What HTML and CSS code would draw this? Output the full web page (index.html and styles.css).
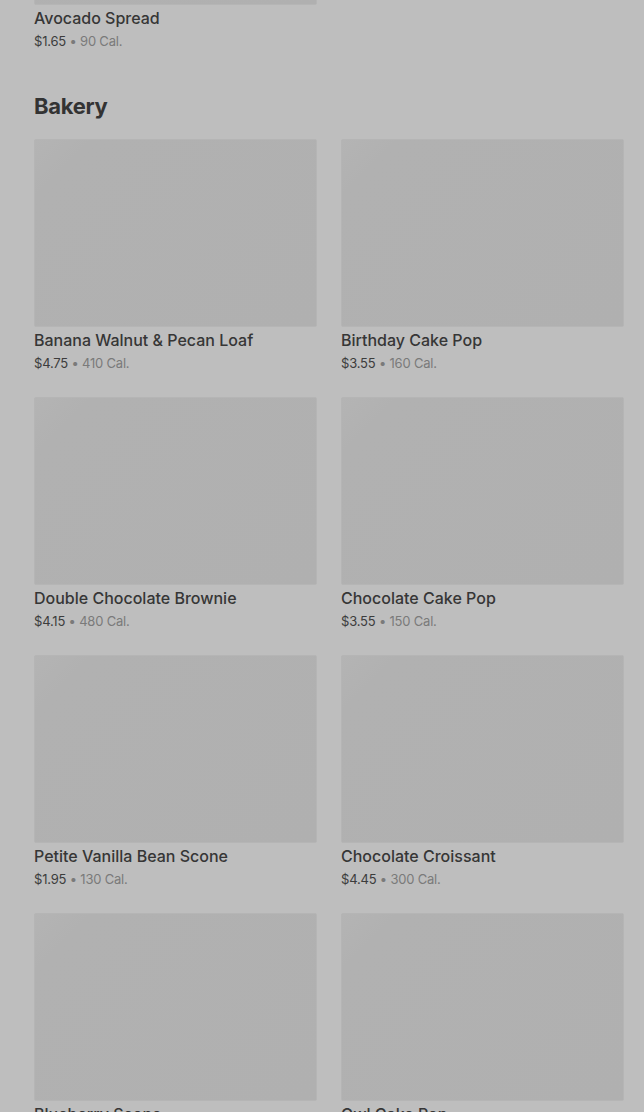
FILE: index.html
```html
<!DOCTYPE html>
<html>
<head>
<meta charset="utf-8">
<link rel="stylesheet" href="styles.css">
</head>
<body>
<main class="page">
  <section class="section section-prev">
    <div class="grid">
      <div class="card">
        <div class="thumb"></div>
        <div class="name">Avocado Spread</div>
        <div class="meta"><span class="price">$1.65</span> <span class="cal">• 90 Cal.</span></div>
      </div>
    </div>
  </section>
  <section class="section">
    <h2 class="heading">Bakery</h2>
    <div class="grid">
      <div class="card"><div class="thumb"></div><div class="name">Banana Walnut &amp; Pecan Loaf</div><div class="meta"><span class="price">$4.75</span> <span class="cal">• 410 Cal.</span></div></div>
      <div class="card"><div class="thumb"></div><div class="name">Birthday Cake Pop</div><div class="meta"><span class="price">$3.55</span> <span class="cal">• 160 Cal.</span></div></div>
      <div class="card"><div class="thumb"></div><div class="name">Double Chocolate Brownie</div><div class="meta"><span class="price">$4.15</span> <span class="cal">• 480 Cal.</span></div></div>
      <div class="card"><div class="thumb"></div><div class="name">Chocolate Cake Pop</div><div class="meta"><span class="price">$3.55</span> <span class="cal">• 150 Cal.</span></div></div>
      <div class="card"><div class="thumb"></div><div class="name">Petite Vanilla Bean Scone</div><div class="meta"><span class="price">$1.95</span> <span class="cal">• 130 Cal.</span></div></div>
      <div class="card"><div class="thumb"></div><div class="name">Chocolate Croissant</div><div class="meta"><span class="price">$4.45</span> <span class="cal">• 300 Cal.</span></div></div>
      <div class="card"><div class="thumb"></div><div class="name">Blueberry Scone</div><div class="meta"><span class="price">$2.95</span> <span class="cal">• 380 Cal.</span></div></div>
      <div class="card"><div class="thumb"></div><div class="name">Owl Cake Pop</div><div class="meta"><span class="price">$3.55</span> <span class="cal">• 160 Cal.</span></div></div>
    </div>
  </section>
</main>
</body>
</html>
```

FILE: styles.css
```css
html, body {
  margin: 0;
  padding: 0;
  background: #bebebe;
  height: 100%;
  overflow: hidden;
}
body {
  font-family: "Inter", "Roboto", sans-serif;
  color: #333333;
}
.page {
  padding: 0 20px 0 34px;
  margin-top: -183px;
}
.grid {
  display: grid;
  grid-template-columns: 283px 283px;
  column-gap: 24px;
  row-gap: 24px;
}
.card {
  display: flex;
  flex-direction: column;
}
.thumb {
  height: 186px;
  background: linear-gradient(135deg, #b4b4b4 0%, #b1b1b1 12%, #b0b0b0 100%);
  border: 1px solid #b5b5b5;
  border-radius: 2px;
}
.name {
  margin-top: 1px;
  font-size: 16px;
  line-height: 24px;
  font-weight: 500;
  color: #363636;
  white-space: nowrap;
}
.meta {
  padding-top: 1px;
  font-size: 13px;
  line-height: 20px;
  color: #3c3c3c;
  letter-spacing: -0.2px;
}
.cal {
  color: #7a7a7a;
}
.section-prev {
  margin-bottom: 41px;
}
.heading {
  margin: 0 0 19px;
  font-size: 22px;
  line-height: 28px;
  font-weight: 700;
  color: #333333;
  letter-spacing: -0.3px;
}
```
